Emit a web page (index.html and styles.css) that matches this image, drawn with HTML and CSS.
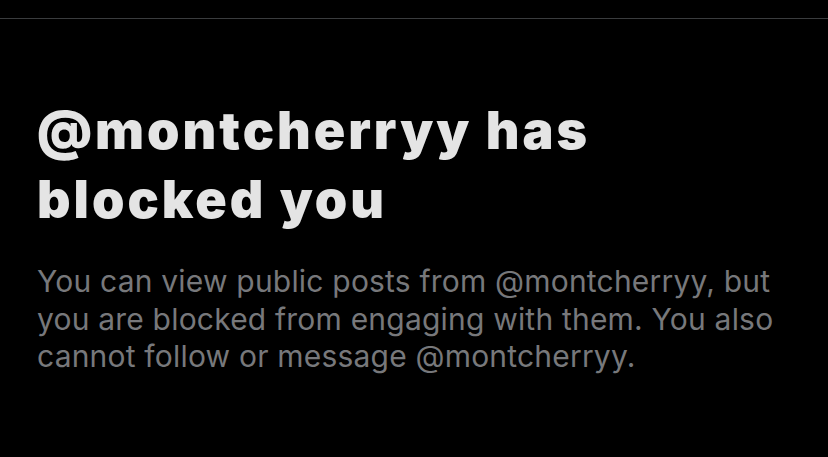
FILE: index.html
```html
<!DOCTYPE html>
<html>
<head><meta charset="utf-8"><link rel="stylesheet" href="styles.css"></head>
<body>
<div class="divider"></div>
<main class="content">
  <h1 class="title">@montcherryy has blocked you</h1>
  <p class="desc">You can view public posts from @montcherryy, but you are blocked from engaging with them. You also cannot follow or message @montcherryy.</p>
</main>
</body>
</html>
```
FILE: styles.css
```css
html, body { margin: 0; padding: 0; background: #000; }
body { width: 828px; height: 457px; overflow: hidden; }
.divider { height: 18px; border-bottom: 1px solid #3a3c3e; }
.content { padding: 77px 20px 0 37px; }
.title {
  margin: 0;
  font-family: Inter, "Liberation Sans", sans-serif;
  font-weight: 900;
  font-size: 52px;
  line-height: 69px;
  letter-spacing: 3px;
  color: #e4e4e4;
  width: 620px;
}
.desc {
  margin: 29px 0 0;
  font-family: Inter, "Liberation Sans", sans-serif;
  font-weight: 400;
  font-size: 30px;
  line-height: 37.5px;
  letter-spacing: 0.2px;
  color: #77787b;
  width: 760px;
}
```
